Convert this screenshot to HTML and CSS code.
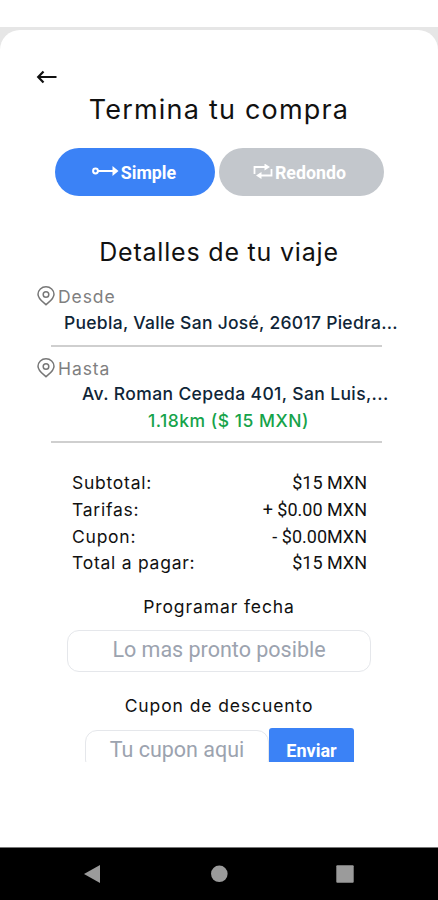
FILE: index.html
```html
<!DOCTYPE html>
<html lang="es">
<head>
    <meta charset="UTF-8">
    <meta name="viewport" content="width=device-width, initial-scale=1.0">
    <title>Termina tu compra</title>
    <link rel="stylesheet" href="styles.css">
</head>
<body>
    <div class="screen">
        <div class="sheet">
            <div class="content">
                <button class="back" aria-label="Volver">
                    <svg width="22" height="16" viewBox="0 0 22 16" fill="none" stroke="#111" stroke-width="2.2">
                        <path d="M20.500 8H2.500M7.500 2.500L2.200 8l5.300 5.500"/>
                    </svg>
                </button>

                <h1 class="title">Termina tu compra</h1>

                <div class="tabs">
                    <button class="tab active">
                        <svg width="28" height="12" viewBox="0 0 28 12" fill="none" stroke="#fff">
                            <circle cx="3.500" cy="5" r="2.4" stroke-width="2"/>
                            <path d="M6 5H22" stroke-width="2"/>
                            <path d="M20.500 0l6 5-6 5z" fill="#fff" stroke="none"/>
                        </svg>
                        <span>Simple</span>
                    </button>
                    <button class="tab">
                        <svg width="21" height="16" viewBox="0 0 21 16" fill="none" stroke="#fff" stroke-width="1.8">
                            <path d="M1.500 10V3h12M18.500 5v6.500H7"/>
                            <path d="M11.500 -.5l5.500 3.500-5.500 3.500zM8.500 8L3 11.500 8.500 15z" fill="#fff" stroke="none"/>
                        </svg>
                        <span>Redondo</span>
                    </button>
                </div>

                <h2 class="subtitle">Detalles de tu viaje</h2>

                <!-- Trip stops -->
                <div class="stop">
                    <div class="stop-label">
                        <svg width="18" height="20" viewBox="0 0 18 20" fill="none" stroke="#777" stroke-width="1.5">
                            <path d="M9 18.700C7.500 17 1 13.500 1 8.300a8 7.500 0 0 1 16 0C17 13.500 10.500 17 9 18.700z"/>
                            <circle cx="9" cy="8.500" r="2.800"/>
                        </svg>
                        <span>Desde</span>
                    </div>
                    <div class="address from">Puebla, Valle San José, 26017 Piedra...</div>
                </div>
                <div class="stop stop-to">
                    <div class="stop-label">
                        <svg width="18" height="20" viewBox="0 0 18 20" fill="none" stroke="#777" stroke-width="1.5">
                            <path d="M9 18.700C7.500 17 1 13.500 1 8.300a8 7.500 0 0 1 16 0C17 13.500 10.500 17 9 18.700z"/>
                            <circle cx="9" cy="8.500" r="2.800"/>
                        </svg>
                        <span>Hasta</span>
                    </div>
                    <div class="address to">Av. Roman Cepeda 401, San Luis,...</div>
                    <div class="distance">1.18km ($ 15 MXN)</div>
                </div>

                <!-- Totals -->
                <div class="totals">
                    <div class="row"><span>Subtotal:</span><span class="amount">$15 MXN</span></div>
                    <div class="row"><span>Tarifas:</span><span class="amount">+ $0.00 MXN</span></div>
                    <div class="row"><span>Cupon:</span><span class="amount">- $0.00MXN</span></div>
                    <div class="row"><span>Total a pagar:</span><span class="amount">$15 MXN</span></div>
                </div>

                <div class="label label-date">Programar fecha</div>
                <div class="field date-field">Lo mas pronto posible</div>

                <div class="label label-coupon">Cupon de descuento</div>
                <div class="coupon">
                    <div class="field coupon-field">Tu cupon aqui</div>
                    <button class="send">Enviar</button>
                </div>
            </div>
        </div>

        <div class="navbar">
            <svg width="18" height="20" viewBox="0 0 18 20"><path d="M0 10L16 1v18z" fill="#9b9b9b"/></svg>
            <svg width="18" height="20" viewBox="0 0 18 20"><circle cx="9.300" cy="9.800" r="8.300" fill="#9b9b9b"/></svg>
            <svg width="18" height="20" viewBox="0 0 18 20"><rect x=".3" y="1.300" width="17.400" height="17.400" rx="1" fill="#9b9b9b"/></svg>
        </div>
    </div>
</body>
</html>
```
FILE: styles.css
```css
* {
    box-sizing: border-box;
}
body {
    margin: 0;
    background-color: #fff;
    font-family: Inter, "Open Sans", sans-serif;
    color: #111;
}
button {
    border: none;
    padding: 0;
    background: none;
    cursor: pointer;
}
svg {
    display: block;
    flex: none;
}
.screen {
    width: 438px;
    height: 900px;
    padding-top: 27px;
    display: flex;
    flex-direction: column;
    overflow: hidden;
}
.sheet {
    flex: 1;
    background: linear-gradient(#e6e6e6 30px, #fff 30px);
    padding-top: 3px;
}
.content {
    height: 732px;
    background-color: #fff;
    border-radius: 20px 20px 0 0;
    overflow: hidden;
}
.back {
    display: block;
    margin: 39px 0 0 36px;
}
.title {
    margin: 7px 0 0;
    font-size: 27px;
    font-weight: 400;
    line-height: 36px;
    letter-spacing: 1.2px;
    text-align: center;
    white-space: nowrap;
}
.tabs {
    display: flex;
    gap: 4px;
    margin: 20px 54px 0 55px;
}
.tab {
    display: flex;
    align-items: center;
    justify-content: center;
    gap: 1px;
    width: 160px;
    height: 48px;
    padding-right: 2px;
    border-radius: 24px;
    background-color: #c3c7cc;
    color: #fff;
    font-family: Roboto, sans-serif;
    font-size: 17.8px;
    font-weight: 700;
}
.tab:last-child {
    width: 165px;
    padding-right: 4px;
}
.tab.active {
    background-color: #3b82f6;
}
.subtitle {
    margin: 40px 0 0;
    font-size: 25px;
    font-weight: 400;
    line-height: 32px;
    letter-spacing: 0.8px;
    text-align: center;
    white-space: nowrap;
}
.stop {
    height: 79px;
    padding-top: 17px;
}
.stop-label {
    display: flex;
    align-items: center;
    gap: 3px;
    height: 22px;
    margin-left: 37px;
    color: #808080;
    font-size: 17.5px;
    letter-spacing: 0.9px;
}
.address {
    height: 30px;
    line-height: 30px;
    font-size: 17.5px;
    font-weight: 500;
    color: #0f2537;
    white-space: nowrap;
}
.from {
    margin-left: 64px;
    padding-top: 1px;
    letter-spacing: 0.28px;
}
.to {
    margin-left: 82px;
    letter-spacing: 0.37px;
}
.stop::after {
    content: "";
    display: block;
    width: 331px;
    height: 2px;
    margin: 8px 0 0 51px;
    background-color: #cfcfcf;
}
.stop-to {
    height: 98px;
    padding-top: 10px;
}
.distance {
    height: 24px;
    line-height: 24px;
    margin-left: 148px;
    font-size: 17.5px;
    font-weight: 500;
    letter-spacing: 0.5px;
    color: #16a34a;
}
.totals {
    margin: 25px 71px 0 72px;
}
.row {
    display: flex;
    justify-content: space-between;
    height: 26.8px;
    line-height: 26.8px;
    font-size: 17.5px;
    letter-spacing: 0.75px;
}
.amount {
    font-family: Roboto, sans-serif;
    font-size: 18px;
    letter-spacing: 0;
}
.label {
    font-size: 17.5px;
    line-height: 24px;
    letter-spacing: 0.9px;
    text-align: center;
}
.label-date {
    margin-top: 18px;
}
.field {
    height: 42px;
    border: 1px solid #e5e7eb;
    border-radius: 12px;
    font-family: Roboto, sans-serif;
    font-size: 21.5px;
    line-height: 38px;
    text-align: center;
    color: #9ca3af;
}
.date-field {
    width: 304px;
    margin: 11px auto 0 67px;
}
.label-coupon {
    margin-top: 22px;
}
.coupon {
    display: flex;
    margin: 10px 0 0 85px;
}
.coupon-field {
    width: 184px;
    margin-top: 2px;
}
.send {
    width: 85px;
    height: 44px;
    border-radius: 3px;
    background-color: #3b82f6;
    color: #fff;
    font-family: Roboto, sans-serif;
    font-size: 18px;
    font-weight: 700;
}
.navbar {
    display: flex;
    align-items: center;
    gap: 108px;
    height: 53px;
    padding-left: 84px;
    background-color: #000;
    border-top: 1px solid #777;
}
```
